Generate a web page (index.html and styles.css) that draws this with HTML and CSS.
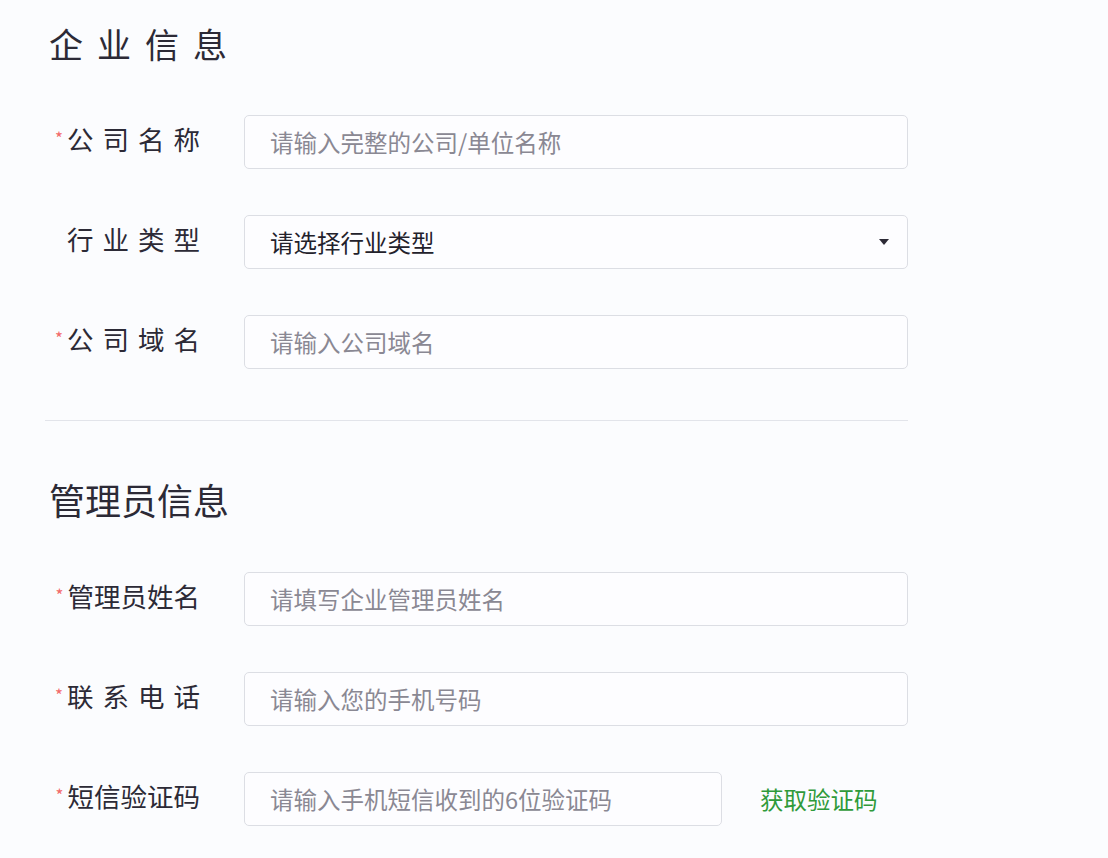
FILE: index.html
```html
<!DOCTYPE html>
<html lang="zh">
<head>
<meta charset="utf-8">
<title>企业信息</title>
<link rel="stylesheet" href="styles.css">
</head>
<body>
<div class="page">
  <h2 class="title spaced-title">企业信息</h2>
  <div class="rows first">
    <div class="row">
      <div class="label"><span class="star">*</span><span class="spaced">公司名称</span></div>
      <input class="field" type="text" placeholder="请输入完整的公司/单位名称">
    </div>
    <div class="row">
      <div class="label"><span class="spaced">行业类型</span></div>
      <div class="field select"><span>请选择行业类型</span><span class="caret"></span></div>
    </div>
    <div class="row">
      <div class="label"><span class="star">*</span><span class="spaced">公司域名</span></div>
      <input class="field" type="text" placeholder="请输入公司域名">
    </div>
  </div>
  <div class="divider"></div>
  <h2 class="title title2">管理员信息</h2>
  <div class="rows second">
    <div class="row">
      <div class="label"><span class="star">*</span><span>管理员姓名</span></div>
      <input class="field" type="text" placeholder="请填写企业管理员姓名">
    </div>
    <div class="row">
      <div class="label"><span class="star">*</span><span class="spaced">联系电话</span></div>
      <input class="field" type="text" placeholder="请输入您的手机号码">
    </div>
    <div class="row">
      <div class="label"><span class="star">*</span><span>短信验证码</span></div>
      <input class="field short" type="text" placeholder="请输入手机短信收到的6位验证码">
      <span class="getcode">获取验证码</span>
    </div>
  </div>
</div>
</body>
</html>
```
FILE: styles.css
```css
html, body {
  margin: 0;
  padding: 0;
  background: #fbfcfe;
}
body {
  font-family: "Noto Sans CJK SC", "Noto Sans", sans-serif;
  color: #2c2a36;
}
.page {
  padding: 27px 0 0 45px;
  width: 863px;
}
.title {
  margin: 0 0 0 4px;
  font-weight: 400;
  font-size: 34px;
  line-height: 34px;
  color: #2c2a36;
}
.spaced-title {
  letter-spacing: 14px;
}
.title2 {
  font-size: 36px;
  line-height: 36px;
  margin-top: 60px;
  letter-spacing: 0;
}
.rows {
  display: flex;
  flex-direction: column;
  gap: 46px;
}
.rows.first {
  margin-top: 54px;
}
.rows.second {
  margin-top: 55px;
}
.row {
  display: flex;
  align-items: center;
  height: 54px;
}
.label {
  width: 155px;
  padding-right: 44px;
  display: flex;
  justify-content: flex-end;
  align-items: flex-start;
  font-size: 26.5px;
  line-height: 30px;
  padding-bottom: 6px;
  color: #2c2a36;
}
.spaced {
  letter-spacing: 9px;
  margin-right: -9px;
}
.star {
  color: #f26a6a;
  font-size: 17px;
  line-height: 16px;
  margin-right: 4px;
  margin-top: 6px;
}
.field {
  box-sizing: border-box;
  width: 664px;
  height: 54px;
  border: 1px solid #dcdee4;
  border-radius: 5px;
  background: #fdfdff;
  padding: 0 18px 0 25px;
  font-family: inherit;
  font-size: 23.5px;
  color: #222;
  outline: none;
  margin: 0;
}
.field::placeholder {
  color: #8a8893;
}
.field.short {
  width: 478px;
}
.select {
  display: flex;
  align-items: center;
  justify-content: space-between;
  color: #23212b;
}
.caret {
  width: 0;
  height: 0;
  border-left: 5px solid transparent;
  border-right: 5px solid transparent;
  border-top: 6px solid #2c2a36;
}
.divider {
  height: 1px;
  background: #e2e4ea;
  margin-top: 51px;
}
.getcode {
  margin-left: 38px;
  font-size: 23.5px;
  color: #2f9a3a;
}
```
